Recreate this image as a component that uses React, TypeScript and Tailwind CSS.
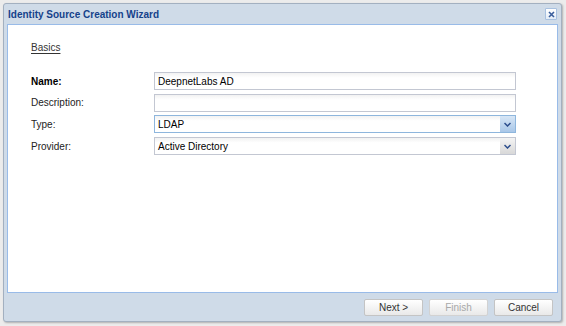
import { ReactNode } from "react"

const font = { fontFamily: '"Liberation Sans", Arial, sans-serif' }

function Field({ label, bold, children }: { label: string; bold?: boolean; children: ReactNode }) {
  return (
    <>
      <div className={"flex items-center text-[10px] text-[#222] " + (bold ? "font-bold text-black" : "")}>
        {label}
      </div>
      {children}
    </>
  )
}

function TextInput({ value }: { value?: string }) {
  return (
    <div className="flex h-[18px] items-center border border-[#c3c7d2] bg-white bg-gradient-to-b from-[#f2f2f2] to-white to-[30%] px-[3px] text-[10px] text-black">
      {value}
    </div>
  )
}

function Select({ value, focused }: { value: string; focused?: boolean }) {
  return (
    <div
      className={
        "flex h-[18px] items-stretch border bg-gradient-to-b from-[#f2f2f2] to-white to-[30%] text-[10px] text-black " +
        (focused ? "border-[#8eb6dd]" : "border-[#c3c7d2]")
      }
    >
      <div className="flex flex-1 items-center px-[3px]">{value}</div>
      <div
        className={
          "flex w-[15px] items-center justify-center " +
          (focused
            ? "bg-gradient-to-b from-[#d7e6f6] to-[#a9c7e8]"
            : "bg-gradient-to-b from-[#f4f4f4] to-[#d8d8d8]")
        }
      >
        <svg width="7" height="5" viewBox="0 0 7 5">
          <path d="M0.5 1L3.5 4L6.5 1" fill="none" stroke="#2b4d8c" strokeWidth="1.5" />
        </svg>
      </div>
    </div>
  )
}

function Button({ children, disabled }: { children: ReactNode; disabled?: boolean }) {
  return (
    <div
      className={
        "flex h-[17px] w-[59px] items-center justify-center rounded-[2px] border bg-gradient-to-b from-white to-[#e9e9e9] text-[10px] " +
        (disabled ? "border-[#d2d2d2] text-[#a8a8a8]" : "border-[#c4c4c4] text-[#333]")
      }
    >
      {children}
    </div>
  )
}

export default function App() {
  return (
    <div className="h-[326px] w-[566px] bg-[#ececec] pb-[4px] pl-[3px] pr-[4px] pt-[3px]" style={font}>
      <div className="flex h-full flex-col rounded-[3px] border border-[#a3b0c0] bg-[#cfdbe8] shadow-[1px_1px_2px_rgba(0,0,0,0.25)]">
        <div className="flex h-[20px] items-center justify-between pl-[4px] pr-[4px]">
          <span className="text-[10px] font-bold text-[#15428b]">
            Identity Source Creation Wizard
          </span>
          <div className="flex h-[12px] w-[12px] items-center justify-center rounded-[1px] border border-[#a8c1e0] bg-gradient-to-b from-white to-[#e3ecf7]">
            <svg width="7" height="7" viewBox="0 0 7 7">
              <path d="M1 1L6 6M6 1L1 6" stroke="#3a5e9c" strokeWidth="1.6" />
            </svg>
          </div>
        </div>
        <div className="mx-[3px] flex-1 border border-[#99bbe8] bg-white pl-[23px] pr-[41px] pt-[17px]">
          <div className="text-[10px] leading-[12px] text-[#333] underline underline-offset-[2px]">Basics</div>
          <div className="mt-[18px] grid grid-cols-[123px_1fr] gap-y-[3.7px]">
            <Field label="Name:" bold>
              <TextInput value="DeepnetLabs AD" />
            </Field>
            <Field label="Description:">
              <TextInput />
            </Field>
            <Field label="Type:">
              <Select value="LDAP" focused />
            </Field>
            <Field label="Provider:">
              <Select value="Active Directory" />
            </Field>
          </div>
        </div>
        <div className="flex h-[28px] items-center justify-end gap-[6px] pr-[8px]">
          <Button>Next &gt;</Button>
          <Button disabled>Finish</Button>
          <Button>Cancel</Button>
        </div>
      </div>
    </div>
  )
}
